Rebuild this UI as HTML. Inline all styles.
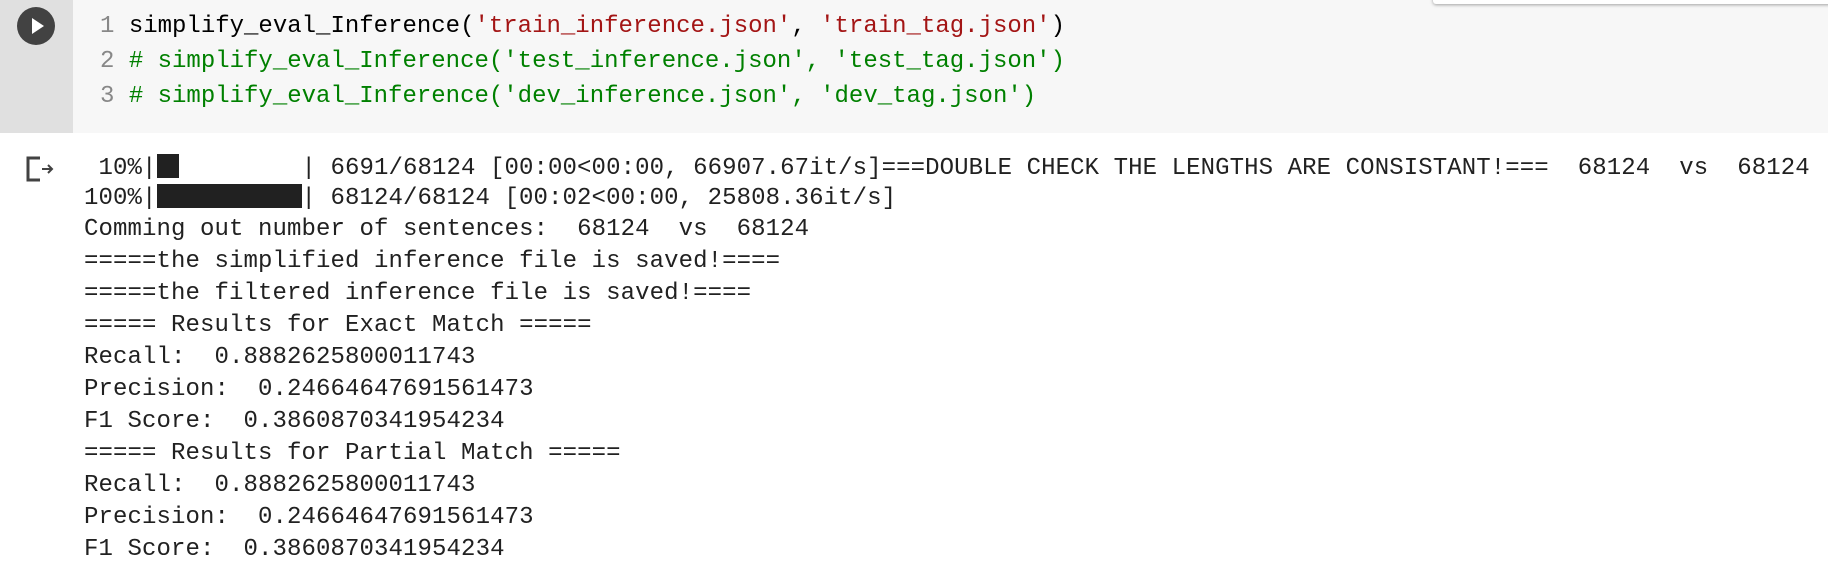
<!DOCTYPE html>
<html><head><meta charset="utf-8"><style>
html,body{margin:0;padding:0;width:1828px;height:583px;overflow:hidden;background:#fff;position:relative}
.mono{font-family:"Liberation Mono",monospace;font-size:24px;white-space:pre;position:absolute;letter-spacing:0.1px}
.gut{position:absolute;left:0;top:0;width:73px;height:133px;background:#e0e0e0}
.code{position:absolute;left:73px;top:0;width:1755px;height:133px;background:#f7f7f7}
.card{position:absolute;left:1433px;top:-10px;width:420px;height:14px;background:#fff;box-shadow:0 1px 3px rgba(0,0,0,.35);border-radius:3px}
.cl{color:#000;left:100px;letter-spacing:0}
.ln{color:#888}
.s{color:#a31515}
.c{color:#008000}
.o{color:#212121;left:84px;line-height:32px}
.b{display:inline-block;background:#212121;height:24px;vertical-align:-4px}
</style></head><body>
<div class="gut"></div>
<div class="code"></div>
<div class="card"></div>
<svg style="position:absolute;left:17px;top:7px" width="38" height="38"><circle cx="19" cy="19" r="19" fill="#424242"/><path d="M15 11 L27 19 L15 27Z" fill="#fff"/></svg>
<div class="mono cl" style="top:13px"><span class="ln">1 </span>simplify_eval_Inference(<span class="s">'train_inference.json'</span>, <span class="s">'train_tag.json'</span>)</div>
<div class="mono cl" style="top:48px"><span class="ln">2 </span><span class="c"># simplify_eval_Inference('test_inference.json', 'test_tag.json')</span></div>
<div class="mono cl" style="top:83px"><span class="ln">3 </span><span class="c"># simplify_eval_Inference('dev_inference.json', 'dev_tag.json')</span></div>
<svg style="position:absolute;left:24px;top:155px" width="32" height="28"><path d="M16 3 H4 V25 H16" fill="none" stroke="#424242" stroke-width="3"/><path d="M18 14 H28 M24 10 L28 14 L24 18" fill="none" stroke="#424242" stroke-width="2"/></svg>
<div class="mono o" style="top:153px"> 10%|<span class="b" style="width:22px"></span><span style="display:inline-block;width:123px"></span>| 6691/68124 [00:00&lt;00:00, 66907.67it/s]===DOUBLE CHECK THE LENGTHS ARE CONSISTANT!===  68124  vs  68124</div>
<div class="mono o" style="top:183px">100%|<span class="b" style="width:145px"></span>| 68124/68124 [00:02&lt;00:00, 25808.36it/s]</div>
<div class="mono o" style="top:214px">Comming out number of sentences:  68124  vs  68124
=====the simplified inference file is saved!====
=====the filtered inference file is saved!====
===== Results for Exact Match =====
Recall:  0.8882625800011743
Precision:  0.24664647691561473
F1 Score:  0.3860870341954234
===== Results for Partial Match =====
Recall:  0.8882625800011743
Precision:  0.24664647691561473
F1 Score:  0.3860870341954234</div>
</body></html>
